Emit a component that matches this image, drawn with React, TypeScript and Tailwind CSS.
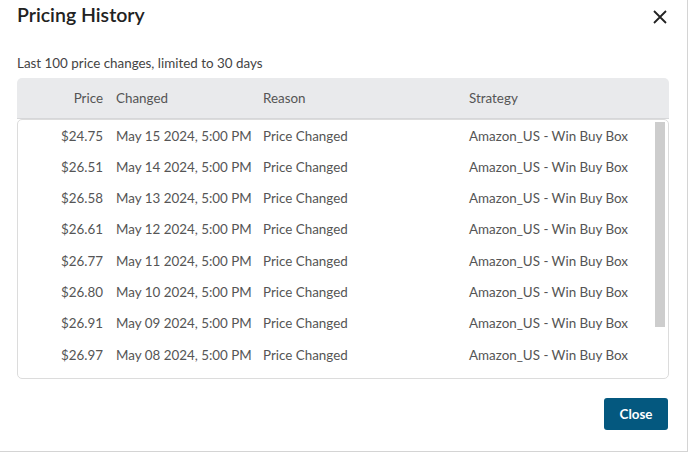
import React from "react";

const rows = [
  ["$24.75", "May 15 2024, 5:00 PM"],
  ["$26.51", "May 14 2024, 5:00 PM"],
  ["$26.58", "May 13 2024, 5:00 PM"],
  ["$26.61", "May 12 2024, 5:00 PM"],
  ["$26.77", "May 11 2024, 5:00 PM"],
  ["$26.80", "May 10 2024, 5:00 PM"],
  ["$26.91", "May 09 2024, 5:00 PM"],
  ["$26.97", "May 08 2024, 5:00 PM"],
];

export default function App() {
  return (
    <div
      className="w-[688px] h-[452px] bg-white border-r border-b border-[#d4d4d4] flex flex-col text-[#4a4a4a]"
      style={{ fontFamily: "Lato, 'Open Sans', sans-serif" }}
    >
      <div className="flex items-center justify-between pl-[17px] pr-[20px] h-[29px]">
        <h1 className="text-[19.5px] font-semibold text-[#222]">Pricing History</h1>
        <svg width="14" height="14" viewBox="0 0 14 14" className="mt-[4px]">
          <path d="M1 1 L13 13 M13 1 L1 13" stroke="#222" strokeWidth="1.8" />
        </svg>
      </div>
      <div className="pl-[17px] pt-[26px] text-[13.4px] leading-[16px] text-[#444] whitespace-nowrap">
        Last 100 price changes, limited to 30 days
      </div>
      <div className="mx-[17px] mt-[7px] w-[652px]">
        <div className="h-[41px] bg-[#e9eaec] rounded-t-[5px] border-b border-[#d6d7d9] flex items-center text-[13.4px] text-[#555] whitespace-nowrap">
          <div className="w-[86px] shrink-0 text-right">Price</div>
          <div className="w-[147px] shrink-0 pl-[13px]">Changed</div>
          <div className="w-[206px] shrink-0 pl-[13px]">Reason</div>
          <div className="pl-[13px]">Strategy</div>
        </div>
        <div className="relative h-[260px] border border-[#dcdcdc] rounded-[5px] overflow-hidden">
          <div className="flex flex-col">
            {rows.map((r, i) => (
              <div key={i} className="h-[31.3px] shrink-0 flex items-center text-[13.4px] text-[#555] whitespace-nowrap">
                <div className="w-[85px] shrink-0 text-right">{r[0]}</div>
                <div className="w-[147px] shrink-0 pl-[13px]">{r[1]}</div>
                <div className="w-[206px] shrink-0 pl-[13px]">Price Changed</div>
                <div className="pl-[13px]">Amazon_US - Win Buy Box</div>
              </div>
            ))}
          </div>
          <div className="absolute right-[3px] top-[2px] w-[10px] h-[205px] bg-[#cdcdcd]" />
        </div>
      </div>
      <div className="flex justify-end pr-[19px] mt-[19px]">
        <button className="w-[64px] h-[32px] rounded-[3px] bg-[#04587f] text-white text-[13.4px] font-bold">
          Close
        </button>
      </div>
    </div>
  );
}
